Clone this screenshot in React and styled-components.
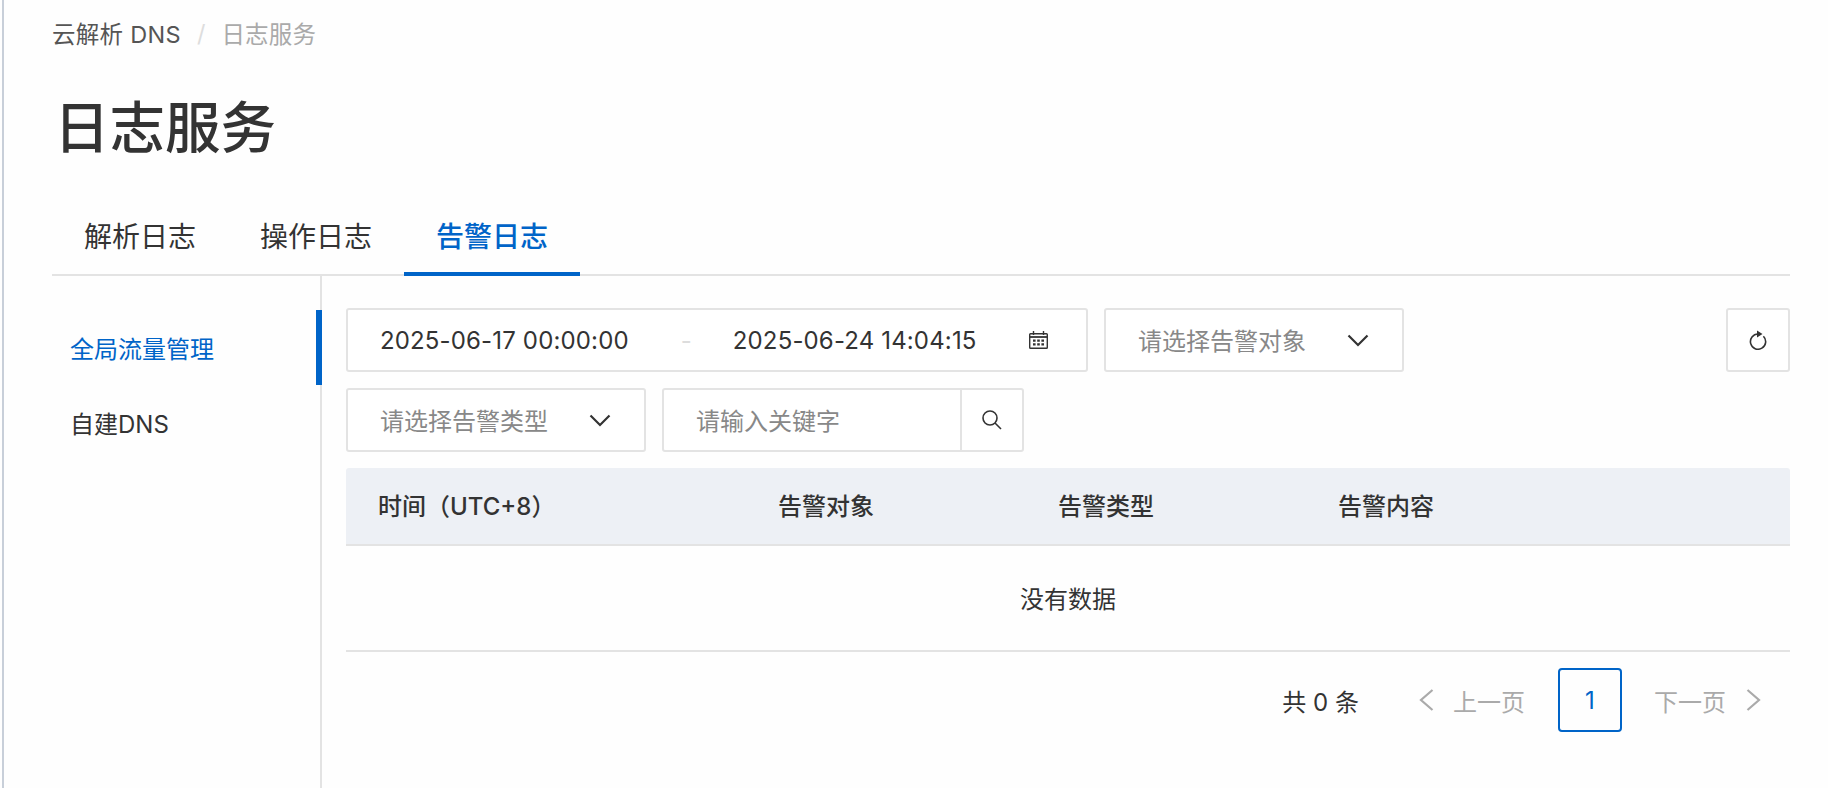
import React from 'react';
import styled, { createGlobalStyle } from 'styled-components';

const GlobalStyle = createGlobalStyle`
  html, body {
    margin: 0;
    padding: 0;
    background: #fefefe;
    font-family: Inter, "Noto Sans CJK SC", sans-serif;
    color: #333;
  }
  * { box-sizing: border-box; }
`;

const Page = styled.div`
  min-height: 788px;
  margin-left: 2px;
  border-left: 2px solid #c8cfd9;
  padding: 0 38px 0 48px;
  display: flex;
  flex-direction: column;
`;

const Breadcrumb = styled.nav`
  height: 66px;
  display: flex;
  align-items: center;
  font-size: 23.5px;
  color: #555;
`;

const Crumb = styled.span`
  color: ${props => (props.$current ? '#aaa' : '#555')};
  letter-spacing: ${props => (props.$current ? '0.2px' : '0.3px')};
`;

const CrumbSep = styled.span`
  color: #ddd;
  margin: 0 16px;
`;

const Title = styled.h1`
  margin: 24px 0 32px 2px;
  font-size: 55.5px;
  line-height: 76px;
  font-weight: 500;
  color: #333;
`;

const TabBar = styled.div`
  height: 78px;
  display: flex;
  border-bottom: 2px solid #e3e3e3;
`;

const Tab = styled.div`
  position: relative;
  width: 176px;
  height: 78px;
  padding-bottom: 4px;
  display: flex;
  align-items: center;
  justify-content: center;
  font-size: 28px;
  font-weight: ${props => (props.$active ? 500 : 400)};
  color: ${props => (props.$active ? '#0064c8' : '#333')};

  ${props => props.$active && `
    &::after {
      content: '';
      position: absolute;
      left: 0;
      right: 0;
      bottom: 0;
      height: 4px;
      background: #0064c8;
    }
  `}
`;

const Body = styled.div`
  flex: 1;
  display: flex;
`;

const Sidebar = styled.aside`
  width: 270px;
  flex-shrink: 0;
  padding-top: 34px;
  border-right: 2px solid #e3e3e3;
`;

const SideItem = styled.div`
  position: relative;
  height: 75px;
  padding-left: 18px;
  display: flex;
  align-items: center;
  font-size: 24px;
  color: ${props => (props.$active ? '#0064c8' : '#333')};

  ${props => props.$active && `
    &::after {
      content: '';
      position: absolute;
      top: 0;
      bottom: 0;
      right: -2px;
      width: 6px;
      background: #0064c8;
    }
  `}
`;

const Main = styled.main`
  flex: 1;
  margin-left: 24px;
  padding-top: 32px;
  display: flex;
  flex-direction: column;
`;

const Row = styled.div`
  display: flex;
  align-items: stretch;
  gap: 16px;
  margin-bottom: 16px;
`;

const Field = styled.div`
  height: 64px;
  width: ${props => props.$width}px;
  border: 2px solid #e3e3e3;
  border-radius: 3px;
  background: #fff;
  display: flex;
  align-items: center;
  font-size: 24px;
`;

const DateField = styled(Field)`
  padding: 0 38px 0 32px;
`;

const DateText = styled.span`
  color: #333;
  font-size: 24px;
  letter-spacing: 0.15px;
  white-space: nowrap;
`;

const Dash = styled.span`
  color: #ddd;
  margin: 0 41px 0 52px;
`;

const CalendarIcon = styled.svg`
  margin-left: auto;
  width: 19px;
  height: 18px;
`;

const SelectField = styled(Field)`
  padding: 0 33px 0 32px;
  justify-content: space-between;
`;

const Placeholder = styled.span`
  color: #888;
  white-space: nowrap;
  padding-bottom: 2px;
`;

const SearchField = styled(Field)`
  padding-left: 32px;
  justify-content: space-between;
`;

const SearchButton = styled.div`
  width: 62px;
  height: 100%;
  border-left: 2px solid #e3e3e3;
  display: flex;
  align-items: center;
  justify-content: center;
`;

const RefreshButton = styled.div`
  margin-left: auto;
  width: 64px;
  height: 64px;
  border: 2px solid #e3e3e3;
  border-radius: 3px;
  background: #fff;
  display: flex;
  align-items: center;
  justify-content: center;
`;

const Table = styled.div`
  display: flex;
  flex-direction: column;
`;

const HeaderRow = styled.div`
  height: 78px;
  padding-bottom: 3px;
  background: #edf0f5;
  border-bottom: 2px solid #e3e3e3;
  border-radius: 3px 3px 0 0;
  display: grid;
  grid-template-columns: 400px 280px 280px 1fr;
  align-items: center;
`;

const HeaderCell = styled.div`
  padding-left: 32px;
  font-size: 24px;
  font-weight: 500;
  color: #333;
`;

const EmptyRow = styled.div`
  height: 106px;
  padding-bottom: 2px;
  border-bottom: 2px solid #e3e3e3;
  display: flex;
  align-items: center;
  justify-content: center;
  font-size: 24px;
  color: #333;
`;

const Pagination = styled.div`
  margin-top: 16px;
  padding-right: 29px;
  display: flex;
  align-items: center;
  justify-content: flex-end;
  height: 64px;
  font-size: 24px;
`;

const Total = styled.span`
  color: #333;
  margin-right: 60px;
  white-space: nowrap;
`;

const PageLink = styled.span`
  color: #aaa;
  white-space: nowrap;
  margin: ${props => props.$margin};
`;

const CurrentPage = styled.div`
  width: 64px;
  height: 64px;
  border: 2px solid #0064c8;
  border-radius: 4px;
  color: #0064c8;
  display: flex;
  align-items: center;
  justify-content: center;
`;

const Chevron = () => (
  <svg width="22" height="13" viewBox="0 0 22 13" fill="none" stroke="#333" strokeWidth="2.2">
    <path d="M1.5 1.5 L11 11 L20.5 1.5" />
  </svg>
);

const PrevArrow = () => (
  <svg width="15" height="22" viewBox="0 0 15 22" fill="none" stroke="#aaa" strokeWidth="2.2">
    <path d="M13.5 1 L2 11 L13.5 21" />
  </svg>
);

const NextArrow = () => (
  <svg width="15" height="22" viewBox="0 0 15 22" fill="none" stroke="#aaa" strokeWidth="2.2">
    <path d="M1.5 1 L13 11 L1.5 21" />
  </svg>
);

const Calendar = () => (
  <CalendarIcon viewBox="0 0 19 18" fill="none" stroke="#333" strokeWidth="1.4">
    <rect x="0.7" y="2.7" width="17.6" height="14.6" rx="0.8" />
    <path d="M0.7 6 H18.3" strokeWidth="1.8" />
    <path d="M4.5 0 V4 M14.5 0 V4" />
    <path d="M4 9.6 H6.6 M8.2 9.6 H10.8 M12.4 9.6 H15 M4 13.4 H6.6 M8.2 13.4 H10.8 M12.4 13.4 H15" strokeWidth="2.4" />
  </CalendarIcon>
);

const SearchGlyph = () => (
  <svg width="20" height="20" viewBox="0 0 20 20" fill="none" stroke="#333" strokeWidth="1.6">
    <circle cx="8" cy="8" r="7" />
    <path d="M13 13 L19 19" />
  </svg>
);

const RefreshGlyph = () => (
  <svg width="18" height="20" viewBox="0 0 18 20" fill="none" stroke="#333" strokeWidth="1.6">
    <path d="M9 4 A7.6 7.6 0 1 0 14.4 6.2" />
    <path d="M8 0.5 L13.5 4 L8 7.5 Z" fill="#333" stroke="none" />
  </svg>
);

const App = () => (
  <>
    <GlobalStyle />
    <Page>
      <Breadcrumb>
        <Crumb>云解析 DNS</Crumb>
        <CrumbSep>/</CrumbSep>
        <Crumb $current>日志服务</Crumb>
      </Breadcrumb>
      <Title>日志服务</Title>
      <TabBar>
        <Tab>解析日志</Tab>
        <Tab>操作日志</Tab>
        <Tab $active>告警日志</Tab>
      </TabBar>
      <Body>
        <Sidebar>
          <SideItem $active>全局流量管理</SideItem>
          <SideItem>自建DNS</SideItem>
        </Sidebar>
        <Main>
          <Row>
            <DateField $width={742}>
              <DateText>2025-06-17 00:00:00</DateText>
              <Dash>-</Dash>
              <DateText>2025-06-24 14:04:15</DateText>
              <Calendar />
            </DateField>
            <SelectField $width={300}>
              <Placeholder>请选择告警对象</Placeholder>
              <Chevron />
            </SelectField>
            <RefreshButton>
              <RefreshGlyph />
            </RefreshButton>
          </Row>
          <Row>
            <SelectField $width={300}>
              <Placeholder>请选择告警类型</Placeholder>
              <Chevron />
            </SelectField>
            <SearchField $width={362}>
              <Placeholder>请输入关键字</Placeholder>
              <SearchButton>
                <SearchGlyph />
              </SearchButton>
            </SearchField>
          </Row>
          <Table>
            <HeaderRow>
              <HeaderCell>时间（UTC+8）</HeaderCell>
              <HeaderCell>告警对象</HeaderCell>
              <HeaderCell>告警类型</HeaderCell>
              <HeaderCell>告警内容</HeaderCell>
            </HeaderRow>
            <EmptyRow>没有数据</EmptyRow>
          </Table>
          <Pagination>
            <Total>共 0 条</Total>
            <PrevArrow />
            <PageLink $margin="0 33px 0 19px">上一页</PageLink>
            <CurrentPage>1</CurrentPage>
            <PageLink $margin="0 20px 0 32px">下一页</PageLink>
            <NextArrow />
          </Pagination>
        </Main>
      </Body>
    </Page>
  </>
);

export default App;
